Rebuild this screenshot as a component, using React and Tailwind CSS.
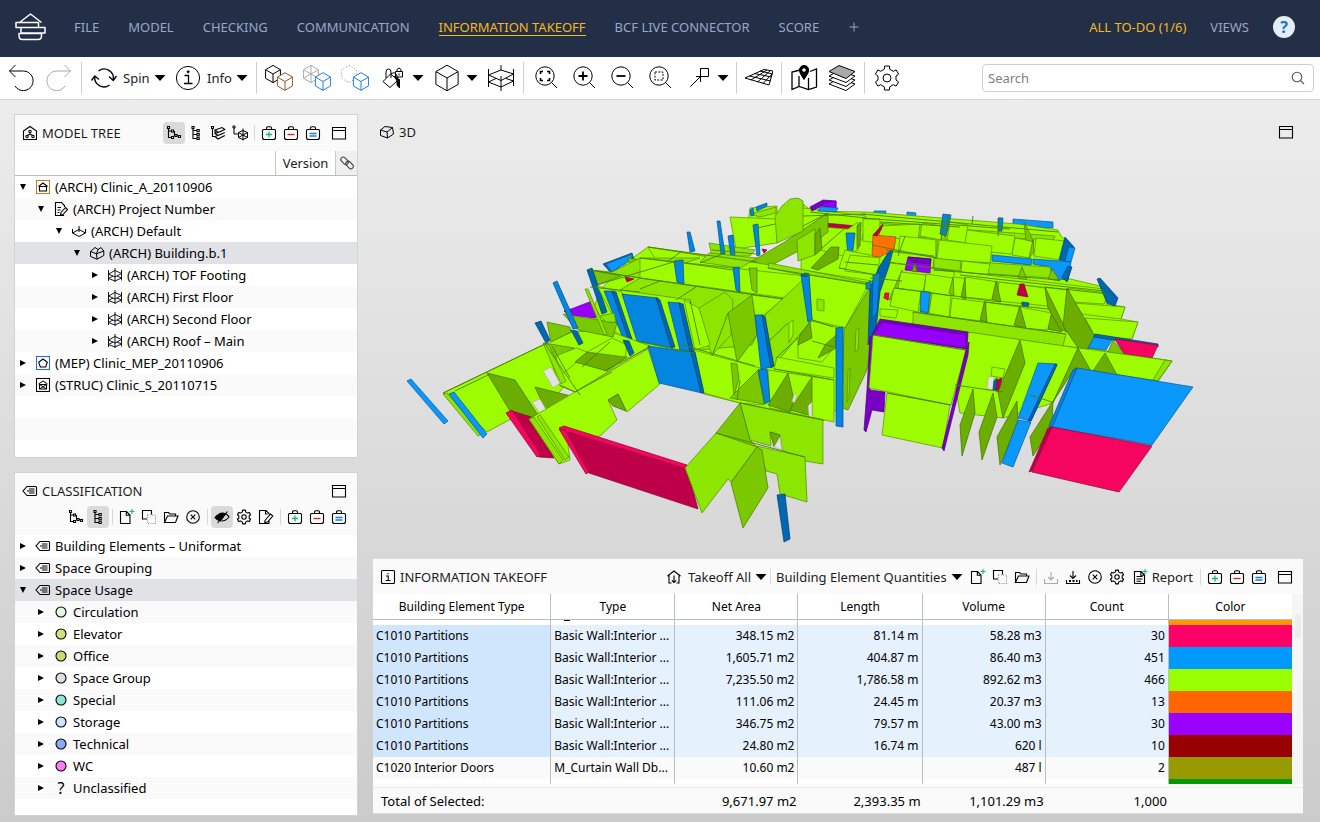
import React from "react";
import clsx from "clsx";

/* ---------- toolbar icons (28px) ---------- */

const Big = ({ children, color = "#000" }) => (
  <svg
    className="size-7 shrink-0"
    viewBox="0 0 28 28"
    fill="none"
    stroke={color}
    strokeWidth="1"
  >
    {children}
  </svg>
);

const hexPoint = (cx, cy, r, i) => {
  const a = (Math.PI / 3) * i - Math.PI / 2;
  return `${(cx + r * Math.cos(a)).toFixed(1)} ${(cy + r * Math.sin(a)).toFixed(1)}`;
};

function Cube({ cx, cy, r, color = "#000", fill = "none", wire, dotted }) {
  const p = [0, 1, 2, 3, 4, 5].map((i) => hexPoint(cx, cy, r, i));
  const spokes = (wire ? [0, 1, 2, 3, 4, 5] : [1, 3, 5])
    .map((i) => `M${cx} ${cy}L${p[i]}`)
    .join("");
  return (
    <g stroke={color} fill={fill} strokeDasharray={dotted ? "1 2" : undefined}>
      <path d={`M${p.join("L")}Z`} />
      {!dotted && <path d={spokes} />}
    </g>
  );
}

const gearPath = (c, r1, r2) => {
  const pts = [];
  for (let i = 0; i < 6; i++) {
    [
      [-0.3, r1],
      [-0.2, r2],
      [0.2, r2],
      [0.3, r1],
    ].forEach(([da, r]) => {
      const a = (Math.PI / 3) * i - Math.PI / 2 + da;
      pts.push(`${(c + r * Math.cos(a)).toFixed(1)} ${(c + r * Math.sin(a)).toFixed(1)}`);
    });
  }
  return `M${pts.join("L")}Z`;
};

const Magnifier = ({ children }) => (
  <Big>
    <circle cx="13" cy="12" r="9.2" />
    <path d="M19.6 18.6L25 24" />
    {children}
  </Big>
);

const toolIcons = {
  undo: (
    <Big>
      <path d="M2.5 7H16.5A9.8 9.8 0 1 1 8 22M8.5 1L2.5 7L8.5 13" />
    </Big>
  ),
  redo: (
    <Big color="#aaa">
      <path d="M25.5 7H11.5A9.8 9.8 0 1 0 20 22M19.5 1L25.5 7L19.5 13" />
    </Big>
  ),
  spin: (
    <Big>
      <path
        strokeWidth="1.3"
        d="M8.5 7A9.2 9.2 0 0 1 23.2 16M19 12.5L23.2 16.5L26.5 12M19.5 21A9.2 9.2 0 0 1 4.8 12.5M1.5 16.5L4.8 12L9 15.5"
      />
    </Big>
  ),
  info: (
    <Big>
      <circle cx="14" cy="14" r="11.6" />
      <path strokeWidth="1.3" d="M10.5 11.5H14.5V19.5M10 19.5H18.5" />
      <circle cx="14.2" cy="7.8" r="1" fill="#000" />
    </Big>
  ),
  solid: (
    <Big>
      <Cube cx={8} cy={10} r={8.6} />
      <Cube cx={20} cy={17.5} r={8.8} color="#8b5a2b" fill="#fff" />
    </Big>
  ),
  wire: (
    <Big>
      <Cube cx={8} cy={10} r={8.6} color="#aaa" wire />
      <Cube cx={20} cy={17.5} r={8.8} color="#1e7fd6" fill="#fff" />
    </Big>
  ),
  hidden: (
    <Big>
      <Cube cx={8} cy={10} r={8.6} color="#888" dotted />
      <Cube cx={20} cy={17.5} r={8.8} color="#1e7fd6" fill="#fff" />
    </Big>
  ),
  paint: (
    <Big>
      <path d="M4 17.5L11.5 10L19 16L11 23.5Z" />
      <path d="M7 14V8Q7 5 9.5 5T12 8V14M12 10Q17 6 18.5 14" />
      <path d="M15.5 12.5L20.5 15.5V24L18 21V17Z" fill="#000" />
      <path d="M16.5 7.5H23.5V13H16.5ZM18 7.5V5.5Q20 2.5 22 5.5V7.5M20 9.5V11.5" />
    </Big>
  ),
  cube: (
    <Big>
      <Cube cx={14} cy={14} r={12.8} />
    </Big>
  ),
  section: (
    <Big>
      <path d="M1.5 5V23M26.5 5V22M14 1V6M14 12V27M1.5 11L14 6L26.5 10L14 16.5ZM1.5 18L14 23L26.5 17M1.5 18L9 14.5M26.5 17L19 14.5" />
    </Big>
  ),
  zoomFit: (
    <Magnifier>
      <path
        strokeWidth="1.6"
        d="M8.5 10V7.5H11M15 7.5H17.5V10M17.5 14V16.5H15M11 16.5H8.5V14"
      />
    </Magnifier>
  ),
  zoomIn: (
    <Magnifier>
      <path strokeWidth="1.8" d="M8.5 12H17.5M13 7.5V16.5" />
    </Magnifier>
  ),
  zoomOut: (
    <Magnifier>
      <path strokeWidth="1.8" d="M8.5 12H17.5" />
    </Magnifier>
  ),
  zoomArea: (
    <Magnifier>
      <rect x="9" y="8" width="8" height="8" strokeDasharray="2 1.3" />
    </Magnifier>
  ),
  measure: (
    <Big>
      <path d="M16.5 4.5H24.5V12.5H12M16.5 4.5V18M16.5 12.5L6.5 22.5" />
    </Big>
  ),
  grid: (
    <Big>
      <path d="M0 14L19 5.5L28 7L24 21ZM6 16L22 6M12.5 18L25.5 6.5M18 19.5L27 10M9.5 9.5L26.5 13M15 7L27.5 10M4.5 12L25.5 17" />
    </Big>
  ),
  map: (
    <Big>
      <path
        strokeWidth="1.3"
        d="M10 6L2 8V25.5L9 22.5L18.5 25.5L26.5 23V5L20 7.5M9 22.5V12M18.5 25.5V14"
      />
      <path
        d="M14 15.5C11.5 11.5 9.5 9 9.5 6A4.6 4.6 0 0 1 18.7 6C18.7 9 16.5 11.5 14 15.5Z"
        fill="#000"
      />
      <circle cx="14" cy="6" r="1.8" fill="#fff" stroke="none" />
    </Big>
  ),
  layers: (
    <Big>
      <path fill="#fff" d="M1 20L11 14.5L27 20L18 26.5Z" />
      <path fill="#fff" d="M1 16L11 10.5L27 16L18 22.5Z" />
      <path fill="#fff" d="M1 12L11 6.5L27 12L18 18.5Z" />
      <path fill="#aaa" d="M1 7.5L11 1.5L27 7.5L18 14.5Z" />
    </Big>
  ),
  gear: (
    <Big>
      <path strokeLinejoin="round" d={gearPath(14, 9.2, 12.2)} />
      <circle cx="14" cy="14" r="4" />
    </Big>
  ),
};

/* ---------- panel icons (16px) ---------- */

const Small = ({ children, color = "#000" }) => (
  <svg
    className="size-4 shrink-0"
    viewBox="0 0 16 16"
    fill="none"
    stroke={color}
    strokeWidth="1.1"
  >
    {children}
  </svg>
);

const bag = (
  <path d="M2.5 4.5H13.5Q14.5 4.5 14.5 5.5V12.5Q14.5 14.5 12.5 14.5H3.5Q1.5 14.5 1.5 12.5V5.5Q1.5 4.5 2.5 4.5ZM5.5 4.5V3Q5.5 1.8 6.8 1.8H9.2Q10.5 1.8 10.5 3V4.5" />
);
const sheet = <path d="M2.5 2.5H9L12.5 6V14.5H2.5ZM8.8 2.5V6.2H12.5" />;
const greenPlus = <path stroke="#10b981" d="M13 0V5M10.5 2.5H15.5" />;

const icons = {
  model: (
    <Small>
      <path d="M1.5 6L8 1.5L14.5 6V14.5H1.5Z" />
      <circle cx="8" cy="6.5" r="1.2" />
      <circle cx="5" cy="11.5" r="1.2" />
      <circle cx="11" cy="11.5" r="1.2" />
      <path d="M8 7.5V9M5.5 10.5L8 9L10.5 10.5" />
    </Small>
  ),
  treeStep: (
    <Small>
      <path d="M2.5 3V12.5H5.5M2.5 6H5.5M8.5 6V10.5H12.5" />
      <path
        fill="#fff"
        d="M1.5 1.5H3.5V3.5H1.5ZM5.5 5H7.5V7H5.5ZM5.5 11.5H7.5V13.5H5.5ZM9 9.5H11V11.5H9ZM12.5 10.5H14.5V12.5H12.5Z"
      />
    </Small>
  ),
  treeList: (
    <Small>
      <path d="M5 3V13.5H9M5 5.5H9M5 9.5H9" />
      <path
        fill="#fff"
        d="M4 1.5H6V3.5H4ZM9 4.5H11.2V6.7H9ZM9 8.5H11.2V10.7H9ZM9 12.3H11.2V14.5H9Z"
      />
    </Small>
  ),
  treeLayers: (
    <Small>
      <path d="M2.5 3V11.5H5M1.5 1.5H3.5V3.5H1.5ZM5 5L12 2.5L14.8 4.5L8 7.5ZM5 8.5L8 10.5L14.8 7.5M5 11.5L8 14L14.8 10.5M5 5V8.5L12 6M5 11.5L12 9" />
    </Small>
  ),
  treeSpace: (
    <Small>
      <path
        strokeWidth="1"
        d="M2 3V9H6M1 1H3V3H1ZM6.5 7.5L11 5.5L15.5 7.5V12.5L11 14.5L6.5 12.5ZM11 3.5V15.5M6.5 7.5L15.5 12.5M15.5 7.5L6.5 12.5"
      />
    </Small>
  ),
  bagAdd: (
    <Small>
      {bag}
      <path stroke="#10b981" strokeWidth="1.3" d="M8 6.5V12.5M5 9.5H11" />
    </Small>
  ),
  bagRemove: (
    <Small>
      {bag}
      <path stroke="#e11d1d" strokeWidth="1.3" d="M4.5 9.5H11.5" />
    </Small>
  ),
  bagSet: (
    <Small>
      {bag}
      <path stroke="#1e7fd6" strokeWidth="1.3" d="M4.5 8.5H11.5M4.5 11H11.5" />
    </Small>
  ),
  window: (
    <Small>
      <path d="M1.5 2.5H14.5V14H1.5ZM1.5 5.5H14.5" />
    </Small>
  ),
  link: (
    <Small color="#444">
      <g transform="rotate(45 8 8)">
        <rect x="0.5" y="5.8" width="8.5" height="4.8" rx="2.4" />
        <rect x="7" y="5.2" width="8.5" height="4.8" rx="2.4" />
      </g>
    </Small>
  ),
  arch: (
    <Small>
      <rect x="1.5" y="1.5" width="13" height="13" stroke="#b9812b" />
      <path d="M3.5 7.5L8 4L12.5 7.5M4.5 7.5V12H11.5V7.5Z" />
    </Small>
  ),
  mep: (
    <Small>
      <rect x="1.5" y="1.5" width="13" height="13" stroke="#2f6fb5" />
      <path d="M8 4L12.3 7.2L10.7 12H5.3L3.7 7.2Z" />
    </Small>
  ),
  struc: (
    <Small>
      <rect x="1.5" y="1.5" width="13" height="13" strokeWidth="1" />
      <path
        strokeWidth="1"
        d="M3.5 7L8 4L12.5 7M4.5 7.5H11.5V12H4.5ZM4.5 7.5L11.5 12M11.5 7.5L4.5 12"
      />
    </Small>
  ),
  project: (
    <Small>
      <path d="M11 14.5H2.5V1.5H8.5L11.5 4.5V6M4.5 6.5H8M4.5 9H7.5M4.5 11.5H6.5M8 11.5L12.5 6.5L14.5 8.5L10 13.5L7.5 14Z" />
    </Small>
  ),
  site: (
    <Small>
      <path d="M1.5 10L8 6.5L14.5 10L8 13.5ZM8 3V9M1.5 10V6M14.5 10V6" strokeWidth="1" />
    </Small>
  ),
  building: (
    <Small>
      <path
        strokeWidth="1"
        d="M1.5 6.5L6 2.5L9 4.5L12 2.5L14.8 6V10.5L8 14.2L1.5 11.5ZM1.5 6.5L7.5 8.8L14.8 6M7.5 8.8L8 14.2M7.5 8.8L9 4.5"
      />
    </Small>
  ),
  story: (
    <Small>
      <path
        strokeWidth="0.9"
        d="M1.5 3V14M14.5 3V13.5M8 1V15M1.5 7L8 3.5L14.5 6.5L8 10ZM1.5 11.5L8 14L14.5 11M1.5 11.5L6 9M14.5 11L10 9"
      />
    </Small>
  ),
  tag: (
    <Small>
      <path d="M5 3.5H13.5Q14.5 3.5 14.5 4.5V11.5Q14.5 12.5 13.5 12.5H5L1 8Z" />
      <path strokeWidth="1" d="M7 6H12.5M5 8H12.5M7 10H12.5" />
    </Small>
  ),
  fileNew: (
    <Small>
      <path d="M1.5 2.5H7.5L11 6V14.5H1.5ZM7.3 2.5V6.2H11" />
      {greenPlus}
    </Small>
  ),
  copy: (
    <Small>
      <path d="M6 10H1.5V1.5H10.5V5.5" />
      <rect x="6.5" y="6" width="8" height="8.5" stroke="#888" strokeDasharray="1 1.3" />
    </Small>
  ),
  folder: (
    <Small>
      <path d="M1.5 13.5V3.5H5.5L7 5H12.5V7M1.5 13.5L4.5 7H15L12.5 13.5Z" />
    </Small>
  ),
  close: (
    <Small>
      <circle cx="8" cy="8" r="6.3" />
      <path d="M5.7 5.7L10.3 10.3M10.3 5.7L5.7 10.3" />
    </Small>
  ),
  eye: (
    <Small>
      <path fill="#000" d="M1 8.5Q7 2 11.5 5L6.5 12Q3 11.5 1 8.5Z" />
      <path d="M12 5Q14 6 15 8Q12 12 7.5 12M3.5 14L13.5 2.5" />
    </Small>
  ),
  gear: (
    <Small>
      <path strokeLinejoin="round" d={gearPath(8, 5.3, 7)} />
      <circle cx="8" cy="8" r="2.2" />
    </Small>
  ),
  edit: (
    <Small>
      <path d="M11 12V14.5H1.5V1.5H8L11 4.5V5.5M7.5 1.5V5H9.5M7 11.5L12.5 5L14.8 7L9.5 13L6.8 13.5Z" />
    </Small>
  ),
  takeoff: (
    <Small>
      <path d="M1.5 7L8 2L14.5 7M3 6V14H5.5M13 6V14H10.5M8 6.5V13.5M5.8 11.3L8 13.5L10.2 11.3" />
    </Small>
  ),
  download: (
    <Small color="#aaa">
      <path d="M1.5 10V14.5H14.5V10M8 3V11M5 8L8 11L11 8" />
    </Small>
  ),
  downloadAll: (
    <Small>
      <path d="M1.5 11V14.5H14.5V11M8 2V9.5M5 6.5L8 9.5L11 6.5" />
      <path strokeWidth="2" strokeDasharray="2 1.5" d="M4 12H12.5" />
    </Small>
  ),
  report: (
    <Small>
      {sheet}
      <path d="M4.5 7.5H10.5M4.5 10H10.5M4.5 12.3H9" />
      {greenPlus}
    </Small>
  ),
  infoBox: (
    <Small>
      <rect x="1.5" y="1.5" width="13" height="13" rx="1" />
      <path d="M6 7H8.2V11.5M5.8 11.5H10.5M8 4V5.3" />
    </Small>
  ),
  view3d: (
    <Small>
      <path
        strokeWidth="1"
        d="M1.5 6L6 2.5L13.5 3.5L14.5 10L8.5 14L1.5 11.5ZM1.5 6L8 8L13.5 3.5M8 8L8.5 14"
      />
    </Small>
  ),
};

/* ---------- shared pieces ---------- */

const Caret = () => (
  <svg className="h-1.5 w-3 shrink-0" viewBox="0 0 12 6">
    <path d="M0.5 0H11.5L6 6Z" />
  </svg>
);

const BarSep = () => <span className="mx-[3px] h-8 w-px shrink-0 bg-[#d0d0d0]" />;
const Sep = () => <span className="mx-[3px] h-4 w-px shrink-0 bg-[#d8d8d8]" />;

const Tool = ({ name, label }) => (
  <button aria-label={label} className="flex w-[38px] shrink-0 justify-center">
    {toolIcons[name]}
  </button>
);

const MenuArrow = ({ label }) => (
  <button aria-label={label} className="flex h-7 w-4 shrink-0 items-center">
    <Caret />
  </button>
);

const LabelTool = ({ name, label }) => (
  <button className="flex w-[84px] shrink-0 items-center">
    <span className="flex w-[38px] shrink-0 justify-center">{toolIcons[name]}</span>
    <span className="mr-1">{label}</span>
    <Caret />
  </button>
);

const IconButton = ({ name, label, active }) => (
  <button
    aria-label={label}
    className={clsx(
      "flex size-[22px] shrink-0 items-center justify-center rounded-sm",
      active && "bg-[#dadada]"
    )}
  >
    {icons[name]}
  </button>
);

const BagButtons = () => (
  <>
    <IconButton name="bagAdd" label="Add to selection basket" />
    <IconButton name="bagRemove" label="Remove from selection basket" />
    <IconButton name="bagSet" label="Set selection basket" />
  </>
);

const PanelTitle = ({ icon, children }) => (
  <h2 className="flex items-center gap-1 whitespace-nowrap">
    {icons[icon]}
    {children}
  </h2>
);

/* ---------- header ---------- */

const menus = ["FILE", "MODEL", "CHECKING", "COMMUNICATION", "INFORMATION TAKEOFF", "BCF LIVE CONNECTOR", "SCORE"];

function NavBar() {
  return (
    <header className="flex h-[57px] items-center bg-[#232e47] pr-[25px] pb-[3px] pl-[15px] text-[#9aa7c4]">
      <svg
        className="h-7 w-8 shrink-0"
        viewBox="0 0 32 28"
        fill="none"
        stroke="#fff"
        strokeWidth="1.5"
        strokeLinejoin="round"
      >
        <path d="M4.5 9.5L15.5 1L26.5 9.5M1 9.5H23.5V14.5H1ZM8 14.5H30V20H6V14.5ZM4 20.5H26.5V23Q26.5 26.5 23 26.5H7.5Q4 26.5 4 23Z" />
      </svg>
      <nav className="ml-[27px] flex items-center gap-[29px] whitespace-nowrap">
        {menus.map((item) => (
          <a
            key={item}
            href="#"
            className={clsx(
              "border-b leading-4",
              item === "INFORMATION TAKEOFF"
                ? "border-[#f5b921] text-[#f5b921]"
                : "border-transparent"
            )}
          >
            {item}
          </a>
        ))}
        <button aria-label="Add layout">
          <svg className="size-3" viewBox="0 0 12 12" stroke="currentColor">
            <path d="M6 1.5V10.5M1.5 6H10.5" />
          </svg>
        </button>
      </nav>
      <div className="ml-auto flex items-center gap-6 whitespace-nowrap">
        <a href="#" className="text-[#f5b921]">
          ALL TO-DO (1/6)
        </a>
        <a href="#">VIEWS</a>
        <button
          aria-label="Help"
          className="flex size-[22px] items-center justify-center rounded-full bg-[#e4ecf5] text-base font-bold text-[#1673c8]"
        >
          ?
        </button>
      </div>
    </header>
  );
}

function ToolBar() {
  return (
    <div className="flex h-[43px] items-center border-b border-[#d4d4d4] bg-white pr-[6px] pl-0.5">
      <Tool name="undo" label="Undo" />
      <Tool name="redo" label="Redo" />
      <BarSep />
      <LabelTool name="spin" label="Spin" />
      <LabelTool name="info" label="Info" />
      <BarSep />
      <Tool name="solid" label="Show solid" />
      <Tool name="wire" label="Show wireframe" />
      <Tool name="hidden" label="Hide others" />
      <Tool name="paint" label="Color" />
      <MenuArrow label="Color options" />
      <Tool name="cube" label="View direction" />
      <MenuArrow label="View direction options" />
      <Tool name="section" label="Section box" />
      <BarSep />
      <Tool name="zoomFit" label="Zoom to fit" />
      <Tool name="zoomIn" label="Zoom in" />
      <Tool name="zoomOut" label="Zoom out" />
      <Tool name="zoomArea" label="Zoom to area" />
      <Tool name="measure" label="Dimension" />
      <MenuArrow label="Dimension options" />
      <BarSep />
      <Tool name="grid" label="Grid" />
      <BarSep />
      <Tool name="map" label="Map" />
      <Tool name="layers" label="Floors" />
      <BarSep />
      <Tool name="gear" label="Settings" />
      <label className="ml-auto flex h-7 w-[332px] items-center rounded border border-[#cfcfcf] pr-2 pl-[5px]">
        <span className="sr-only">Search</span>
        <input
          type="search"
          placeholder="Search"
          className="h-6 min-w-0 flex-1 bg-transparent leading-6 outline-none placeholder:text-[#808080]"
        />
        <svg className="size-3.5" viewBox="0 0 14 14" fill="none" stroke="#555" strokeWidth="1.1">
          <circle cx="6" cy="6" r="4.8" />
          <path d="M9.5 9.5L13 13" />
        </svg>
      </label>
    </div>
  );
}

/* ---------- trees ---------- */

const modelRows = [
  { level: 0, icon: "arch", text: "(ARCH) Clinic_A_20110906", open: true },
  { level: 1, icon: "project", text: "(ARCH) Project Number", open: true },
  { level: 2, icon: "site", text: "(ARCH) Default", open: true },
  { level: 3, icon: "building", text: "(ARCH) Building.b.1", open: true, selected: true },
  { level: 4, icon: "story", text: "(ARCH) TOF Footing" },
  { level: 4, icon: "story", text: "(ARCH) First Floor" },
  { level: 4, icon: "story", text: "(ARCH) Second Floor" },
  { level: 4, icon: "story", text: "(ARCH) Roof – Main" },
  { level: 0, icon: "mep", text: "(MEP) Clinic_MEP_20110906" },
  { level: 0, icon: "struc", text: "(STRUC) Clinic_S_20110715" },
  {},
  {},
];

const classRows = [
  { level: 0, icon: "tag", text: "Building Elements – Uniformat" },
  { level: 0, icon: "tag", text: "Space Grouping" },
  { level: 0, icon: "tag", text: "Space Usage", open: true, selected: true },
  { level: 1, dot: "#e3f9e5", text: "Circulation" },
  { level: 1, dot: "#d2e27c", text: "Elevator" },
  { level: 1, dot: "#c9dc74", text: "Office" },
  { level: 1, dot: "#dedede", text: "Space Group" },
  { level: 1, dot: "#8de6d4", text: "Special" },
  { level: 1, dot: "#cce4ff", text: "Storage" },
  { level: 1, dot: "#8fa8f5", text: "Technical" },
  { level: 1, dot: "#ff7af5", text: "WC" },
  { level: 1, text: "Unclassified" },
];

function RowIcon({ row }) {
  if (row.icon) return icons[row.icon];
  if (row.dot) {
    return (
      <svg className="size-4" viewBox="0 0 16 16">
        <circle cx="8" cy="8" r="5" fill={row.dot} stroke="#000" strokeWidth="1.1" />
      </svg>
    );
  }
  return <span className="w-4 text-center text-base">?</span>;
}

function Tree({ rows, label }) {
  return (
    <ul aria-label={label} className="min-h-0 flex-1 overflow-hidden bg-white text-black">
      {rows.map((row, i) => (
        <li
          key={i}
          className={clsx(
            "flex h-[22px] items-center whitespace-nowrap",
            row.selected ? "bg-[#e1e2e6]" : i % 2 === 1 && "bg-[#fafafa]"
          )}
          style={{ paddingLeft: (row.level || 0) * 18 }}
        >
          {row.text && (
            <>
              <button
                aria-label={row.open ? "Collapse" : "Expand"}
                className="flex w-4 shrink-0 justify-center"
              >
                <svg className="size-2" viewBox="0 0 8 8">
                  <path d={row.open ? "M1 1H7L4 7Z" : "M1 1L7 4L1 7Z"} />
                </svg>
              </button>
              <span className="mr-1 ml-1 flex h-4 items-center">
                <RowIcon row={row} />
              </span>
              {row.text}
            </>
          )}
        </li>
      ))}
    </ul>
  );
}

function ModelTree() {
  return (
    <section className="flex min-h-0 flex-1 basis-0 flex-col border border-[#d2d2d2] bg-[#fafafa]">
      <div className="flex h-9 shrink-0 items-center px-[7px]">
        <PanelTitle icon="model">MODEL TREE</PanelTitle>
        <div className="ml-auto flex items-center">
          <IconButton name="treeStep" label="Containment hierarchy" active />
          <IconButton name="treeList" label="Component hierarchy" />
          <IconButton name="treeLayers" label="Layer hierarchy" />
          <IconButton name="treeSpace" label="Space hierarchy" />
          <Sep />
          <BagButtons />
          <span className="w-1" />
          <IconButton name="window" label="Maximize model tree" />
        </div>
      </div>
      <div className="flex h-[25px] shrink-0 border-b border-[#b9bdc4] bg-white">
        <div className="flex-1" />
        <div className="flex w-[61px] items-center justify-center border-x border-[#c8c8c8]">
          Version
        </div>
        <div className="flex w-[21px] items-center justify-center bg-[#efefef]">{icons.link}</div>
      </div>
      <Tree rows={modelRows} label="Model tree" />
    </section>
  );
}

function Classification() {
  return (
    <section className="flex min-h-0 flex-1 basis-0 flex-col border border-[#d2d2d2] bg-[#fafafa]">
      <div className="flex h-8 shrink-0 items-center justify-between px-[7px] pt-1">
        <PanelTitle icon="tag">CLASSIFICATION</PanelTitle>
        <IconButton name="window" label="Maximize classification" />
      </div>
      <div className="flex h-[30px] shrink-0 items-center justify-end pr-[7px] pb-1.5">
        <IconButton name="treeStep" label="Hierarchy" />
        <IconButton name="treeList" label="Flat list" active />
        <Sep />
        <IconButton name="fileNew" label="New classification" />
        <IconButton name="copy" label="Duplicate classification" />
        <IconButton name="folder" label="Open classification" />
        <IconButton name="close" label="Close classification" />
        <Sep />
        <IconButton name="eye" label="Toggle visibility" active />
        <IconButton name="gear" label="Classification settings" />
        <IconButton name="edit" label="Edit classification" />
        <Sep />
        <BagButtons />
      </div>
      <Tree rows={classRows} label="Classification" />
    </section>
  );
}

/* ---------- 3D scene ---------- */

// letter -> [fill, stroke]
const paint = {
  g: ["#9dfd00", "#568f00"],
  m: ["#8ce600", "#528a00"],
  d: ["#7ac800", "#4a7a00"],
  k: ["#6bae00", "#426f00"],
  b: ["#0a98fb", "#005a9c"],
  c: ["#0486e0", "#00508c"],
  e: ["#0068b0", "#003f6e"],
  r: ["#f5055f", "#8f0036"],
  s: ["#bd0048", "#8f0036"],
  p: ["#9600fa", "#5b0099"],
  q: ["#7800c4", "#4b007d"],
  o: ["#ff7200", "#994000"],
  w: ["#e3e3e3", "#a5b58c"],
};

const faces = [
  // far right wing
  "b 1013,219 1053,222 1053,228 1013,226",
  "b 874,211 886,211 885,216 874,214",
  "b 907,212 916,213 915,218 907,216",
  "g 803,204 812,211 866,212 1018,224 1058,230 1061,236 1066,240 1060,258 1050,270 1062,277 1104,287 1108,293 1106,304 1125,307 1121,319 1138,322 1132,339 1095,336 1088,348 1172,361 1158,381 1078,368 968,365 968,332 870,330 800,300",
  "m 862,222 1055,236 1053,240 1010,238 1010,245 862,232",
  "g 880,226 920,224 918,240 878,237",
  "g 922,223 943,226 941,240 920,236",
  "c 943,214 951,215 946,236 940,234",
  "g 950,222 968,225 966,243 947,240",
  "g 967,230 1015,236 1012,254 964,250",
  "c 998,218 1003,218 1002,231 998,231",
  "g 1015,238 1033,241 1030,258 1012,255",
  "d 1024,222 1034,242 1026,240",
  "d 1033,240 1034,252 1029,258",
  "g 1036,238 1065,241 1060,260 1034,256",
  "e 1059,260 1065,237 1074,247 1069,262",
  "b 1069,247 1075,248 1071,262 1065,261",
  "g 900,236 938,240 936,259 898,256",
  "g 939,240 992,246 990,264 937,259",
  "b 992,255 1032,259 1031,265 992,261",
  "b 1033,259 1071,262 1068,280 1058,279 1050,267 1033,264",
  "e 1068,266 1072,267 1067,282 1062,277",
  "g 886,251 935,257 933,268 890,263",
  "m 934,259 1050,267 1052,278 934,270",
  "m 934,258 961,261 960,271 934,268",
  "g 962,261 990,264 988,275 961,272",
  "d 1022,267 1027,280 1018,278",
  "d 1052,269 1060,281 1048,279",
  "g 954,271 1104,289 1102,294 954,277",
  "d 902,270 889,300 898,297 904,285",
  "g 901,272 926,275 923,293 898,288",
  "g 926,274 953,278 951,296 924,292",
  "g 965,277 998,282 994,300 963,297",
  "g 999,282 1045,288 1048,306 997,301",
  "k 965,278 966,300 961,297",
  "k 996,281 1001,302 992,299",
  "d 953,277 954,296 949,293",
  "g 1068,288 1108,293 1104,304 1072,302",
  "g 1074,303 1125,307 1121,319 1082,314",
  "g 1085,318 1138,322 1132,339 1095,336",
  "e 1097,279 1100,278 1118,298 1115,306 1107,303",
  "g 894,288 921,291 918,312 890,306",
  "d 930,293 932,296 928,314 920,312",
  "b 921,291 930,292 928,313 920,311",
  "g 932,293 951,296 949,317 929,313",
  "g 952,298 984,302 981,321 950,317",
  "g 986,302 1019,307 1016,328 985,323",
  "g 1020,307 1052,313 1048,330 1018,328",
  "k 985,301 987,322 980,320",
  "k 1020,306 1026,328 1014,325",
  "k 1052,311 1062,332 1048,329",
  "k 1045,287 1067,332 1060,329 1048,308",
  "k 1067,288 1095,337 1088,349 1078,348 1063,326",
  "s 1020,284 1024,284 1028,297 1017,295",
  "e 1022,302 1029,303 1028,307 1022,306",
  "p 908,257 931,259 930,273 905,270",
  "q 908,257 931,259 930,264 912,262",
  "k 915,263 917,272 912,271",
  "m 913,312 1066,334 1063,346 913,325",
  "b 1095,335 1113,338 1106,350 1088,348",
  "e 1095,334 1158,344 1158,347 1094,337",
  "r 1115,339 1158,345 1152,358 1124,354",
  "d 1113,340 1125,355 1108,352",
  "g 1065,346 1172,361 1158,381 1075,368",
  "m 1165,360 1172,361 1158,381 1153,380",
  "k 1105,353 1117,375 1093,371",
  "g 968,332 1078,348 1053,403 1030,410 1003,418 960,413 955,385",
  "g 880,309 898,310 896,318 880,316",

  // back rows in the middle
  "g 778,212 803,208 866,216 862,240 800,236",
  "q 810,207 823,200 836,201 836,207 822,206 812,211",
  "p 824,202 836,201 836,208 822,206",
  "b 820,207 838,208 836,212 818,211",
  "g 750,208 777,206 777,222 748,222",
  "g 730,217 777,219 777,243 736,249",
  "m 750,214 776,207 776,213 760,217",
  "c 750,210 753,208 754,215 751,216",
  "c 756,207 767,203 767,206 757,211",
  "m 709,243 755,250 750,256 712,256",
  "s 825,223 857,226 856,230 826,227",
  "g 822,227 848,229 858,222 858,250 843,256 820,250",
  "k 857,226 861,222 860,246 857,249",
  "g 863,219 880,219 879,243 863,241",
  "c 846,233 855,233 853,250 848,257",
  "d 740,268 783,243 828,213 828,232 812,244 770,266 757,269",
  "m 797,240 815,229 815,255 798,261",
  "k 820,228 822,249 815,255 815,235",
  "m 775,216 782,206 790,199 798,198 803,201 803,231 777,243",
  "k 811,268 831,247 839,247 838,259 818,270",
  "g 845,250 870,255 866,272 839,268",
  "g 850,255 880,258 877,275 845,271",
  "s 762,249 767,250 764,253",
  "o 873,235 896,237 894,249 880,257 872,256",
  "s 873,235 883,224 881,230 877,236",
  "c 687,232 690,232 695,251 690,252",
  "c 717,221 720,221 725,254 721,254",
  "c 728,236 733,235 735,256 731,257",
  "c 753,225 758,224 760,255 757,256",

  // central block
  "g 648,247 757,263 873,281 870,330 848,400 823,421 740,403 704,394 648,348 590,320 600,290 627,262",
  "e 603,264 632,253 634,260 627,260 612,274",
  "b 606,264 632,254 632,259 612,272",
  "d 627,258 650,261 634,269",
  "g 648,247 740,262 735,268 656,260",
  "m 709,253 757,258 740,268 700,262",
  "m 591,270 640,278 700,258 640,258 612,272",
  "d 591,270 621,276 597,285",
  "g 640,258 870,283 866,310 800,300 640,278",
  "s 625,277 634,279 627,282",
  "e 587,270 592,268 607,312 602,314",
  "m 640,278 783,299 765,318 752,345 700,350 690,300 620,290",
  "d 749,268 757,268 757,293 752,290",
  "m 769,263 870,283 868,288 768,268",
  "c 674,261 683,260 684,284 677,282",
  "c 733,268 739,267 740,292 736,290",
  "g 809,275 869,284 845,328 812,320",
  "m 817,299 824,300 824,311 817,310",
  "g 597,286 622,292 640,345 625,338",
  "c 604,291 612,291 629,337 623,338",
  "e 612,291 616,292 632,339 628,338",
  "c 622,294 658,298 673,348 637,341",
  "e 656,298 660,300 675,347 671,347",
  "c 668,302 680,303 691,352 680,350",
  "e 679,303 683,304 694,352 690,352",
  "m 699,308 725,292 733,300 731,335 712,355 706,340",
  "g 684,300 699,308 710,345 695,350",
  "d 728,313 752,295 757,335 737,362",
  "g 752,295 783,299 764,315 755,316",
  "m 765,315 808,275 810,322 773,367",
  "g 789,323 793,320 793,335 789,343",
  "c 801,275 809,274 812,320 808,322",
  "e 801,275 805,273 809,274 806,277",
  "g 798,338 812,321 836,327 836,345 822,362 798,358",
  "k 810,322 812,338 798,345 800,335",
  "k 836,335 836,348 818,358 825,345",
  "g 777,357 834,368 834,378 774,369",
  "g 694,350 760,368 764,405 740,403 704,393",
  "d 731,363 737,364 739,378 734,396",
  "g 768,370 834,380 834,422 770,408",
  "d 730,398 758,370 764,404",
  "k 768,405 788,373 794,400 790,412",
  "k 790,410 812,377 812,416",
  "w 808,406 812,402 812,417 809,416",
  "w 794,394 797,394 795,402 792,402",
  "c 755,315 763,315 772,367 761,369",
  "e 762,315 765,317 774,366 771,368",
  "c 758,370 767,369 770,401 765,404",
  "d 844,330 870,287 873,330 867,370 848,410 842,408",
  "m 856,330 859,328 858,350 855,352",
  "m 848,370 850,368 849,398 847,402",
  "c 836,328 843,327 843,427 836,426",
  "e 888,253 893,250 889,266 880,292 876,330 868,345 870,288 879,267",
  "c 873,275 880,273 877,312 872,320",
  "r 885,293 889,293 888,300 884,298",
  "c 866,283 871,281 871,289 866,289",

  // left wing
  "b 407,381 411,379 448,421 444,424",
  "q 564,311 570,309 574,315 569,316",
  "p 566,311 592,301 599,315 595,318 569,315",
  "g 443,393 545,344 566,384 541,415 509,420 487,432",
  "g 545,344 572,332 606,330 650,346 575,392 560,386",
  "d 547,322 570,327 571,332 551,342",
  "d 563,314 617,323 613,337 578,330",
  "m 600,316 614,313 616,322 606,322",
  "d 544,343 574,348 553,361",
  "g 556,356 576,348 587,352 577,362 560,376",
  "k 587,352 627,357 607,371 575,362",
  "g 587,352 612,338 627,345 625,357",
  "k 535,387 571,396 546,411",
  "m 543,343 549,345 566,381 561,384",
  "k 487,373 515,380 538,415 531,417 510,411",
  "w 543,371 551,367 560,383 553,388",
  "w 532,402 540,399 547,411 541,415",
  "m 443,394 447,393 482,434 478,436",
  "b 449,394 454,392 487,434 483,438",
  "e 535,323 541,321 550,340 546,343",
  "e 571,330 577,331 583,343 579,345",
  "c 553,283 557,281 578,328 573,329",
  "m 585,289 588,289 607,334 604,335",
  "e 623,340 629,341 634,353 630,356",
  "s 512,411 531,417 554,458 539,457",
  "r 506,413 512,410 541,455 537,457",
  "g 529,419 648,349 660,384 627,412 618,394 608,400 617,420 600,436 568,445 570,460 559,464",
  "k 608,400 618,394 626,411 613,406",
  "m 529,419 534,417 563,460 559,464",
  "m 537,417 540,415 569,457 565,460",
  "c 648,346 692,352 702,393 659,383",
  "e 691,352 695,352 704,393 701,393",
  "s 563,429 687,467 698,509 589,473",
  "r 559,428 564,426 687,465 686,469 565,431",
  "r 559,429 565,430 589,472 586,474",

  // courtyard walls
  "m 740,403 823,420 823,464 805,461 782,450 780,435 770,432 771,446 750,440",
  "k 770,432 780,435 774,447",
  "w 774,447 780,437 782,450",
  "d 716,433 740,403 750,440 757,447",
  "m 685,468 716,433 757,447 731,482 728,479 702,513",
  "m 757,446 805,457 807,502 780,494 777,474 766,471",
  "d 757,447 762,450 768,488 743,528 731,483",
  "e 777,495 785,494 790,539 784,542",

  // purple room and front right
  "q 870,337 873,335 870,390 885,392 884,412 872,410 866,432 864,430 867,390",
  "q 880,319 968,332 967,349 872,335",
  "p 882,322 966,335 965,348 873,335",
  "g 873,335 966,350 951,405 869,388",
  "g 887,393 950,405 943,448 882,435",
  "q 966,350 969,342 968,355 944,451 942,448",
  "k 973,389 975,413 962,456 960,425",
  "k 993,393 997,417 982,460 979,432",
  "w 988,378 994,375 993,390 987,389",
  "g 992,367 1005,369 1003,378 991,376",
  "s 997,380 1002,378 999,392 995,390",
  "e 994,381 997,378 996,389 993,390",
  "k 1020,340 1025,363 1003,418 998,392",
  "k 1017,401 1018,424 1000,465 997,437",
  "k 1078,348 1091,371 1075,368 1053,402",
  "k 1053,401 1030,437 1033,456 1052,427",
  "b 1038,363 1057,364 1031,421 1018,418",
  "e 1055,364 1057,365 1031,421 1028,421",
  "b 1018,420 1031,422 1013,467 1002,463",
  "b 1077,368 1193,387 1152,445 1052,427",
  "c 1073,370 1077,368 1052,427 1049,426",
  "r 1052,427 1152,446 1119,492 1032,472",
  "s 1048,428 1052,427 1032,471 1029,472",
];

// wall tops and joints drawn over the faces
const edges =
  "M862,214L1058,232M862,218L1010,229M880,222L960,227M872,245L936,258M888,262L954,271M960,275L1104,291" +
  "M934,270L1060,280M894,288L1000,302M984,302L1048,309M913,312L1066,334M870,278L902,281M886,250L934,256" +
  "M1045,287L1108,294M898,256L905,236M936,240V258M944,224L941,240M973,216L972,224M948,214L945,238" +
  "M1000,217L998,236M640,258L674,262M684,263L733,270M648,247L757,262M667,262L682,251M700,263L722,254" +
  "M640,278L783,299M640,289L660,281M676,300L696,287M590,270L640,278M597,285L680,260M590,287L640,292" +
  "M712,356L728,313M690,300L700,345M683,345L755,366M640,342L694,353M788,323L765,345M774,369L834,380" +
  "M716,433L805,457M740,403L823,420M873,335L966,350M887,393L951,405M955,385L1003,392M1030,395L1052,402" +
  "M812,341L834,347M798,338L776,358M833,327L812,320M545,344L580,395M552,346L570,378M560,385L575,392" +
  "M575,392L612,372M582,367L610,342M443,393L545,344M455,391L490,374M604,371L648,348M740,380L737,400" +
  "M768,268L870,285M839,268L877,275M845,262L878,265M822,248L845,228M803,216L866,214M810,212L866,218" +
  "M803,226L828,213M757,228L775,224M712,250L757,254";

function Viewer() {
  return (
    <section className="flex min-h-0 flex-1 flex-col">
      <div className="flex h-9 shrink-0 items-center justify-between px-1.5">
        <PanelTitle icon="view3d">3D</PanelTitle>
        <IconButton name="window" label="Maximize 3D view" />
      </div>
      <svg className="min-h-0 w-full flex-1" viewBox="373 150 930 408" role="img" aria-label="Building model">
        <g strokeWidth="0.7" strokeLinejoin="round">
          {faces.map((face, i) => {
            const [fill, stroke] = paint[face[0]];
            return <polygon key={i} points={face.slice(2)} fill={fill} stroke={stroke} />;
          })}
        </g>
        <path d={edges} fill="none" stroke="#4b8000" strokeWidth="0.9" />
      </svg>
    </section>
  );
}

/* ---------- takeoff table ---------- */

const columns = ["Building Element Type", "Type", "Net Area", "Length", "Volume", "Count", "Color"];

const wall = "Basic Wall:Interior ...";
const takeoffRows = [
  ["C1010 Partitions", wall, "348.15 m2", "81.14 m", "58.28 m3", "30", "#ff0066"],
  ["C1010 Partitions", wall, "1,605.71 m2", "404.87 m", "86.40 m3", "451", "#0099ff"],
  ["C1010 Partitions", wall, "7,235.50 m2", "1,786.58 m", "892.62 m3", "466", "#99ff00"],
  ["C1010 Partitions", wall, "111.06 m2", "24.45 m", "20.37 m3", "13", "#ff6600"],
  ["C1010 Partitions", wall, "346.75 m2", "79.57 m", "43.00 m3", "30", "#9900ff"],
  ["C1010 Partitions", wall, "24.80 m2", "16.74 m", "620 l", "10", "#990000"],
  ["C1020 Interior Doors", "M_Curtain Wall Db...", "10.60 m2", "", "487 l", "2", "#999900"],
];

const Cols = () => (
  <colgroup>
    <col className="w-[19.4%]" />
    <col className="w-[13.5%]" />
    <col className="w-[13.4%]" />
    <col className="w-[13.5%]" />
    <col className="w-[13.4%]" />
    <col className="w-[13.4%]" />
    <col className="w-[13.4%]" />
  </colgroup>
);

function Takeoff() {
  return (
    <section className="flex shrink-0 flex-col border-y border-[#dcdcdc] bg-[#fafafa]">
      <div className="flex h-[35px] items-center px-[7px]">
        <PanelTitle icon="infoBox">INFORMATION TAKEOFF</PanelTitle>
        <div className="ml-auto flex items-center whitespace-nowrap">
          <button className="flex items-center">
            <span className="mr-1.5">{icons.takeoff}</span>
            <span className="mr-1">Takeoff All</span>
            <Caret />
          </button>
          <Sep />
          <button className="mr-1 flex items-center">
            <span className="mr-1 ml-0.5">Building Element Quantities</span>
            <Caret />
          </button>
          <IconButton name="fileNew" label="New definition" />
          <IconButton name="copy" label="Duplicate definition" />
          <IconButton name="folder" label="Open definition" />
          <Sep />
          <IconButton name="download" label="Save" />
          <IconButton name="downloadAll" label="Save as" />
          <IconButton name="close" label="Clear takeoff" />
          <IconButton name="gear" label="Takeoff settings" />
          <button className="mr-1 flex items-center">
            <span className="mr-1 ml-1">{icons.report}</span>
            Report
          </button>
          <Sep />
          <BagButtons />
          <span className="w-1" />
          <IconButton name="window" label="Maximize takeoff" />
        </div>
      </div>
      <div className="flex bg-white text-xs">
        <div className="min-w-0 flex-1">
          <table className="w-full table-fixed border-separate border-spacing-0 text-black">
            <Cols />
            <thead>
              <tr className="h-[26px]">
                {columns.map((name) => (
                  <th
                    key={name}
                    className="border-r border-b border-[#b9bdc4] p-0 text-center font-normal last:border-r-0"
                  >
                    {name}
                  </th>
                ))}
              </tr>
            </thead>
            <tbody>
              <tr className="h-[5px]">
                {[0, 1, 2, 3, 4, 5].map((i) => (
                  <td key={i} className="border-r border-[#b9bdc4] p-0">
                    {i === 1 && <hr className="mb-1 ml-[13px] w-1.5 border-black" />}
                  </td>
                ))}
                <td className="bg-[#ff9900] p-0" />
              </tr>
              {takeoffRows.map((row, i) => {
                const selected = i < 6;
                return (
                  <tr key={i} className={clsx("h-[22px]", selected ? "bg-[#e5f1fd]" : "bg-[#fafafa]")}>
                    {row.slice(0, 6).map((cell, j) => (
                      <td
                        key={j}
                        className={clsx(
                          "border-r border-[#b9bdc4] px-[3px] py-0 whitespace-nowrap",
                          j > 1 && "text-right",
                          j === 0 && selected && "bg-[#d0e6fc]"
                        )}
                      >
                        {cell}
                      </td>
                    ))}
                    <td className="p-0" style={{ backgroundColor: row[6] }} />
                  </tr>
                );
              })}
              <tr className="h-[5px]">
                {[0, 1, 2, 3, 4, 5].map((i) => (
                  <td key={i} className="border-r border-[#b9bdc4] p-0" />
                ))}
                <td className="bg-[#009900] p-0" />
              </tr>
            </tbody>
          </table>
        </div>
        <div className="w-[11px] bg-[#f6f6f6] pt-5">
          <div className="mx-auto h-6 w-1.5 rounded-full bg-[#ececec]" />
        </div>
      </div>
      <div className="mt-[3px] flex h-[26px] items-center border-t border-[#ededed] pr-[11px] text-black">
        <table className="w-full table-fixed">
          <Cols />
          <tbody>
            <tr>
              <th className="p-0 pl-2 text-left font-normal" colSpan={2}>
                Total of Selected:
              </th>
              <td className="p-0 pr-0.5 text-right">9,671.97 m2</td>
              <td className="p-0 pr-0.5 text-right">2,393.35 m</td>
              <td className="p-0 pr-0.5 text-right">1,101.29 m3</td>
              <td className="p-0 pr-0.5 text-right">1,000</td>
              <td />
            </tr>
          </tbody>
        </table>
      </div>
    </section>
  );
}

export default function App() {
  return (
    <div className="flex h-screen min-h-[640px] flex-col bg-linear-to-b from-[#f1f1f1] to-[#cbcbcb] font-['Noto_Sans',sans-serif] text-[13px] leading-4 text-[#1c1c1c]">
      <NavBar />
      <ToolBar />
      <main className="flex min-h-0 flex-1 gap-[15px] pr-[17px] pb-1.5 pl-3.5">
        <div className="flex w-[344px] shrink-0 flex-col gap-3.5 pt-3.5">
          <ModelTree />
          <Classification />
        </div>
        <div className="flex min-w-0 flex-1 flex-col pt-3.5 pb-0.5">
          <Viewer />
          <Takeoff />
        </div>
      </main>
    </div>
  );
}
